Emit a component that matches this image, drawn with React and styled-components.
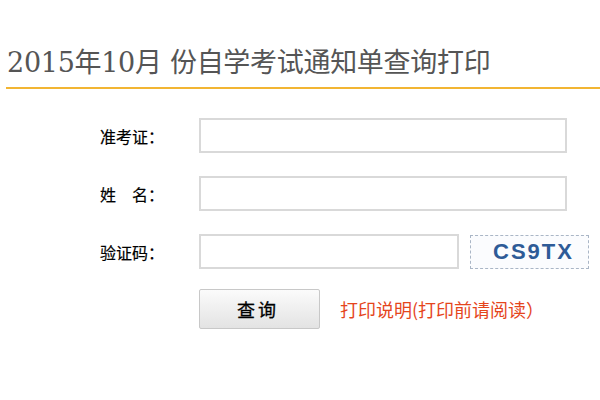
import styled, { createGlobalStyle } from "styled-components";

const GlobalStyle = createGlobalStyle`
    html, body {
        margin: 0;
        padding: 0;
        background: #fff;
    }
    body {
        font-family: "Noto Sans CJK SC", "Liberation Sans", sans-serif;
    }
`;

const Page = styled.div`
    width: 600px;
    height: 400px;
    overflow: hidden;
`;

const Title = styled.h2`
    margin: 0 0 0 6px;
    padding: 47px 0 8px 1px;
    font-family: "DejaVu Serif", "Noto Sans CJK SC", serif;
    font-weight: normal;
    font-size: 27px;
    line-height: 32px;
    color: #555;
    border-bottom: 2px solid #f2b532;
    white-space: nowrap;
    letter-spacing: -0.3px;
`;

const Form = styled.form`
    display: flex;
    flex-direction: column;
    gap: 23px;
    margin-top: 29px;
    padding-left: 100px;
`;

const Row = styled.div`
    display: flex;
    align-items: center;
    height: 35px;
`;

const Label = styled.label`
    width: 65px;
    margin-right: 34px;
    font-size: 16px;
    color: #000;
    white-space: nowrap;
    -webkit-text-stroke: 0.2px #000;
`;

const Input = styled.input`
    box-sizing: border-box;
    width: ${(p) => p.$width}px;
    height: 35px;
    border: 2px solid #d9d9d9;
    background: #fff;
    outline: none;
    padding: 0 6px;
    font-size: 14px;
`;

const Captcha = styled.div`
    box-sizing: border-box;
    width: 119px;
    height: 34px;
    margin-left: 11px;
    border: 1px dashed #aab6c6;
    background: #fbfcfe;
    display: flex;
    align-items: center;
    justify-content: center;
    padding-left: 8px;
    font-family: "Liberation Sans", Arial, sans-serif;
    font-weight: bold;
    font-size: 22px;
    letter-spacing: 2px;
    color: #2e5b97;
`;

const ButtonRow = styled.div`
    display: flex;
    align-items: center;
    margin-top: 20px;
    padding-left: 199px;
`;

const Button = styled.button`
    box-sizing: border-box;
    width: 121px;
    height: 40px;
    border: 1px solid #c8c8c8;
    border-radius: 2px;
    background: linear-gradient(#fbfbfb, #e3e3e3);
    font-family: "Noto Sans CJK SC", sans-serif;
    font-size: 18px;
    letter-spacing: 3px;
    padding-left: 3px;
    color: #000;
    -webkit-text-stroke: 0.3px #000;
    cursor: pointer;
`;

const HelpLink = styled.a`
    margin-left: 20px;
    font-size: 18px;
    color: #e5451c;
    text-decoration: none;
    white-space: nowrap;
`;

export default function App() {
    return (
        <Page>
            <GlobalStyle />
            <Title>2015年10月 份自学考试通知单查询打印</Title>
            <Form onSubmit={(e) => e.preventDefault()}>
                <Row>
                    <Label>准考证：</Label>
                    <Input $width={368} />
                </Row>
                <Row>
                    <Label>姓　名：</Label>
                    <Input $width={368} />
                </Row>
                <Row>
                    <Label>验证码：</Label>
                    <Input $width={260} />
                    <Captcha>CS9TX</Captcha>
                </Row>
            </Form>
            <ButtonRow>
                <Button type="button">查询</Button>
                <HelpLink href="#">打印说明(打印前请阅读）</HelpLink>
            </ButtonRow>
        </Page>
    );
}
